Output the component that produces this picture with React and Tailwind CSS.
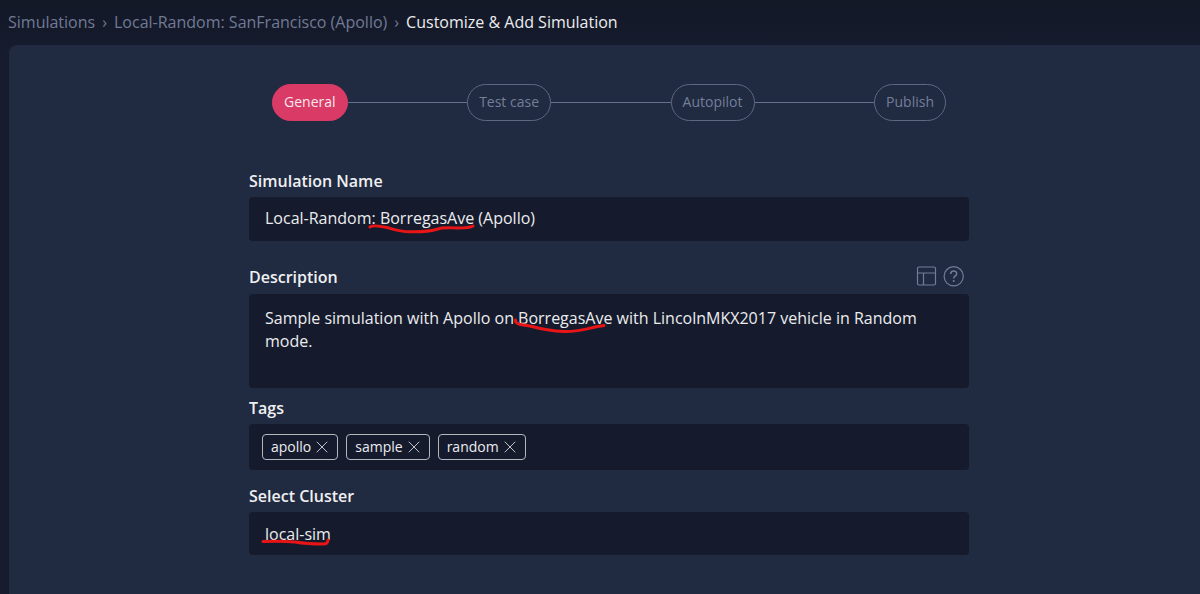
import React from "react";

const steps = ["General", "Test case", "Autopilot", "Publish"];

const fieldClass =
  "block w-full rounded bg-[#151b2d] px-4 text-base text-[#ececee] outline-none";

const labelClass = "block text-base leading-6 font-semibold text-[#f0f0f2]";

function Label({ htmlFor, children }) {
  return (
    <label htmlFor={htmlFor} className={labelClass}>
      {children}
    </label>
  );
}

function Underline({ className, width, height, d }) {
  return (
    <svg
      className={`pointer-events-none absolute ${className}`}
      width={width}
      height={height}
      viewBox={`0 0 ${width} ${height}`}
      fill="none"
      stroke="#e81416"
      strokeWidth="3"
      strokeLinecap="round"
      strokeLinejoin="round"
      aria-hidden="true"
    >
      <path d={d} />
    </svg>
  );
}

function Stepper() {
  return (
    <nav aria-label="Steps" className="flex items-center px-[23px]">
      {steps.map((step, i) => (
        <React.Fragment key={step}>
          {i > 0 && <span className="h-px flex-1 bg-[#68718b]" />}
          <button
            type="button"
            className={
              i === 0
                ? "h-[37px] rounded-full border border-[#d93a66] bg-[#d93a66] px-[11px] pb-px text-sm text-[#f8e8ee]"
                : "h-[37px] rounded-full border border-[#5f6882] px-[11px] pb-px text-sm text-[#757e99]"
            }
          >
            {step}
          </button>
        </React.Fragment>
      ))}
    </nav>
  );
}

function Tag({ name }) {
  return (
    <span className="flex h-[26px] items-center gap-1 rounded border border-[#b5b7bd] px-2 text-sm text-[#ececee]">
      {name}
      <button type="button" aria-label={`Remove ${name}`}>
        <svg width="14" height="14" viewBox="0 0 14 14" stroke="#c0c2c8" strokeWidth="1" strokeLinecap="round">
          <path d="M2 2 12 12M12 2 2 12" />
        </svg>
      </button>
    </span>
  );
}

export default function App() {
  return (
    <div className="flex min-h-screen flex-col bg-[#161b2d] font-['Open_Sans',sans-serif]">
      <nav
        aria-label="Breadcrumb"
        className="flex h-[45px] items-center gap-[7px] bg-linear-to-b from-[#131827] to-[#161b2d] px-2 pb-0.5 text-base text-[#717a94]"
      >
        <a href="#simulations">Simulations</a>
        <span>›</span>
        <a href="#simulation">Local-Random: SanFrancisco (Apollo)</a>
        <span>›</span>
        <span className="text-[#ececee]" aria-current="page">
          Customize &amp; Add Simulation
        </span>
      </nav>

      <main className="ml-[9px] flex-1 rounded-tl-lg bg-[#202a41] pt-[39px] pb-8 pl-[9px]">
        <form className="mx-auto max-w-[720px]" onSubmit={(e) => e.preventDefault()}>
          <Stepper />

          <div className="mt-12 flex flex-col gap-1">
            <Label htmlFor="name">Simulation Name</Label>
            <div className="relative">
              <input id="name" className={`${fieldClass} h-11 pb-0.5`} defaultValue="Local-Random: BorregasAve (Apollo)" />
              <Underline
                className="top-[26px] left-[118px]"
                width={110}
                height={12}
                d="M3 4C5 2.500 13 3 20 4.500C27 6.500 33 8.800 43 8.800C53 9 63 8.500 71 6C76 4 84 5 91 5C98 5 103 5 106 3"
              />
            </div>
          </div>

          <div className="mt-6 flex flex-col gap-[5px]">
            <div className="flex items-center justify-between">
              <Label htmlFor="description">Description</Label>
              <div className="flex gap-[5px] pr-1 text-[#737c96]">
                <button type="button" aria-label="Layout">
                  <svg width="22" height="22" viewBox="0 0 22 22" fill="none" stroke="currentColor" strokeWidth="1.200">
                    <rect x="1.500" y="1" width="18" height="18" rx="1.500" />
                    <path d="M1.500 7H19.500M7.500 7V19" />
                  </svg>
                </button>
                <button type="button" aria-label="Help">
                  <svg width="22" height="22" viewBox="0 0 22 22" fill="none" stroke="currentColor" strokeWidth="1.200">
                    <circle cx="10.700" cy="10.300" r="9.600" />
                    <path d="M7.700 7.900C7.700 4.100 13.700 4.100 13.700 7.700C13.700 9.900 10.700 9.900 10.700 12.400" strokeWidth="1.500" />
                    <circle cx="10.700" cy="15.100" r="1" fill="currentColor" stroke="none" />
                  </svg>
                </button>
              </div>
            </div>
            <div className="relative">
              <textarea
                id="description"
                className={`${fieldClass} h-[94px] resize-none py-[13px] leading-[23px]`}
                defaultValue="Sample simulation with Apollo on BorregasAve with LincolnMKX2017 vehicle in Random mode."
              />
              <Underline
                className="top-[23px] left-[264px]"
                width={96}
                height={18}
                d="M2.500 3C2 7 7 7.500 17 9C28 12 38 14 51 14.500C65 15 75 11.500 82 10C85 9 88 9 91 8.500"
              />
            </div>
          </div>

          <div className="mt-2 flex flex-col gap-1">
            <span className={labelClass}>Tags</span>
            <div className="flex min-h-[46px] flex-wrap items-center gap-2 rounded bg-[#151b2d] px-[13px]">
              <Tag name="apollo" />
              <Tag name="sample" />
              <Tag name="random" />
            </div>
          </div>

          <div className="mt-[14px] flex flex-col gap-1">
            <Label htmlFor="cluster">Select Cluster</Label>
            <div className="relative">
              <select id="cluster" className={`${fieldClass} h-[43px] appearance-none`}>
                <option>local-sim</option>
              </select>
              <Underline
                className="top-[24px] left-[11px]"
                width={72}
                height={12}
                d="M3 5.500C14 5 25 5 35 6C44 7.500 55 8 63 8C66 8 68 7 68 4"
              />
            </div>
          </div>
        </form>
      </main>
    </div>
  );
}
